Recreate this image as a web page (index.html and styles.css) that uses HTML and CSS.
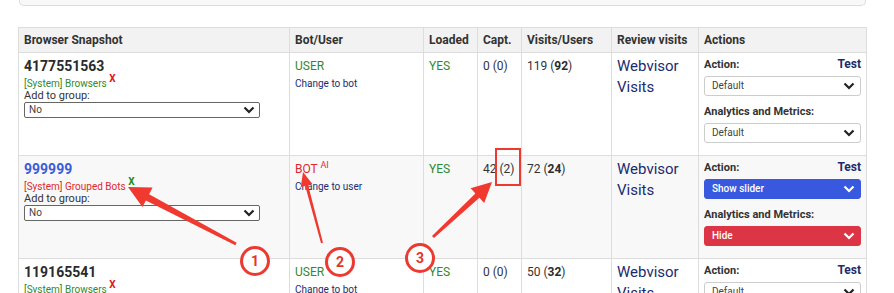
FILE: index.html
```html
<!DOCTYPE html>
<html lang="en">
<head>
    <meta charset="UTF-8">
    <title>Browser Snapshots</title>
    <link rel="stylesheet" href="styles.css">
</head>
<body>
    <div class="page">
        <div class="top-panel"></div>

        <table class="snapshots">
            <thead>
                <tr>
                    <th class="col-snap">Browser Snapshot</th>
                    <th class="col-bot">Bot/User</th>
                    <th class="col-loaded">Loaded</th>
                    <th class="col-capt">Capt.</th>
                    <th class="col-visits">Visits/Users</th>
                    <th class="col-review">Review visits</th>
                    <th class="col-actions">Actions</th>
                </tr>
            </thead>
            <tbody>
                <!-- row 1 -->
                <tr>
                    <td>
                        <div class="snap-id">4177551563</div>
                        <div class="group ok">[System] Browsers <sup class="x red">X</sup></div>
                        <div class="add-label">Add to group:</div>
                        <div class="fake-select small"><span>No</span><svg width="12" height="8" viewBox="0 0 12 8"><path d="M1.5 1.5 L6 6 L10.5 1.5" fill="none" stroke="#222" stroke-width="2.2"/></svg></div>
                    </td>
                    <td>
                        <div class="who user">USER</div>
                        <a class="change">Change to bot</a>
                    </td>
                    <td><span class="yes">YES</span></td>
                    <td class="num">0 (0)</td>
                    <td class="num">119 (<b>92</b>)</td>
                    <td><a class="webvisor">Webvisor<br>Visits</a></td>
                    <td>
                        <div class="action-head"><span>Action:</span><a class="test">Test</a></div>
                        <div class="fake-select"><span>Default</span><svg width="12" height="8" viewBox="0 0 12 8"><path d="M1.5 1.5 L6 6 L10.5 1.5" fill="none" stroke="#222" stroke-width="2.2"/></svg></div>
                        <div class="action-head metrics"><span>Analytics and Metrics:</span></div>
                        <div class="fake-select"><span>Default</span><svg width="12" height="8" viewBox="0 0 12 8"><path d="M1.5 1.5 L6 6 L10.5 1.5" fill="none" stroke="#222" stroke-width="2.2"/></svg></div>
                    </td>
                </tr>
                <!-- row 2 -->
                <tr class="striped">
                    <td>
                        <div class="snap-id blue">999999</div>
                        <div class="group bad">[System] Grouped Bots <sup class="x green">X</sup></div>
                        <div class="add-label">Add to group:</div>
                        <div class="fake-select small"><span>No</span><svg width="12" height="8" viewBox="0 0 12 8"><path d="M1.5 1.5 L6 6 L10.5 1.5" fill="none" stroke="#222" stroke-width="2.2"/></svg></div>
                    </td>
                    <td>
                        <div class="who bot">BOT <sup>AI</sup></div>
                        <a class="change">Change to user</a>
                    </td>
                    <td><span class="yes">YES</span></td>
                    <td class="num">42 (2)</td>
                    <td class="num">72 (<b>24</b>)</td>
                    <td><a class="webvisor">Webvisor<br>Visits</a></td>
                    <td>
                        <div class="action-head"><span>Action:</span><a class="test">Test</a></div>
                        <div class="fake-select filled slider"><span>Show slider</span><svg width="12" height="8" viewBox="0 0 12 8"><path d="M1.5 1.5 L6 6 L10.5 1.5" fill="none" stroke="#fff" stroke-width="2.2"/></svg></div>
                        <div class="action-head metrics"><span>Analytics and Metrics:</span></div>
                        <div class="fake-select filled hide"><span>Hide</span><svg width="12" height="8" viewBox="0 0 12 8"><path d="M1.5 1.5 L6 6 L10.5 1.5" fill="none" stroke="#fff" stroke-width="2.2"/></svg></div>
                    </td>
                </tr>
                <!-- row 3 -->
                <tr>
                    <td>
                        <div class="snap-id">119165541</div>
                        <div class="group ok">[System] Browsers <sup class="x red">X</sup></div>
                        <div class="add-label">Add to group:</div>
                        <div class="fake-select small"><span>No</span><svg width="12" height="8" viewBox="0 0 12 8"><path d="M1.5 1.5 L6 6 L10.5 1.5" fill="none" stroke="#222" stroke-width="2.2"/></svg></div>
                    </td>
                    <td>
                        <div class="who user">USER</div>
                        <a class="change">Change to bot</a>
                    </td>
                    <td><span class="yes">YES</span></td>
                    <td class="num">0 (0)</td>
                    <td class="num">50 (<b>32</b>)</td>
                    <td><a class="webvisor">Webvisor<br>Visits</a></td>
                    <td>
                        <div class="action-head"><span>Action:</span><a class="test">Test</a></div>
                        <div class="fake-select"><span>Default</span><svg width="12" height="8" viewBox="0 0 12 8"><path d="M1.5 1.5 L6 6 L10.5 1.5" fill="none" stroke="#222" stroke-width="2.2"/></svg></div>
                        <div class="action-head metrics"><span>Analytics and Metrics:</span></div>
                        <div class="fake-select"><span>Default</span><svg width="12" height="8" viewBox="0 0 12 8"><path d="M1.5 1.5 L6 6 L10.5 1.5" fill="none" stroke="#222" stroke-width="2.2"/></svg></div>
                    </td>
                </tr>
            </tbody>
        </table>

        <!-- Screenshot annotations drawn on top -->
        <svg class="annotations" width="894" height="293" viewBox="0 0 894 293">
            <g fill="#f0392f">
                <polygon points="128,187 152.6,187.6 149.1,194.2 236.7,242.7 235.3,245.3 145.9,200.4 142.4,207"/>
                <polygon points="303,172 312.4,184 308.1,185.1 323,242.7 321,243.3 305.2,185.9 300.8,187.1"/>
                <polygon points="492,182 484.2,202.9 479.4,197.8 434,238.1 432,235.9 475.4,193.4 470.6,188.3"/>
            </g>
            <rect x="496" y="149" width="24" height="36" fill="none" stroke="#ec3a30" stroke-width="2"/>
            <g class="badge">
                <circle cx="255" cy="261" r="13.5"/>
                <text x="255" y="266">1</text>
            </g>
            <g class="badge">
                <circle cx="340" cy="262" r="13.5"/>
                <text x="340" y="267">2</text>
            </g>
            <g class="badge">
                <circle cx="420" cy="258" r="13.5"/>
                <text x="420" y="263">3</text>
            </g>
        </svg>
    </div>
</body>
</html>
```

FILE: styles.css
```css
body {
    margin: 0;
    font-family: Roboto, "Liberation Sans", Arial, sans-serif;
    color: #333;
    background: #fff;
}

.page {
    position: relative;
    height: 293px;
    overflow: hidden;
    padding: 0 0 0 18px;
}

/* the panel cut off at the top of the screenshot */
.top-panel {
    width: 845px;
    height: 5px;
    margin-left: 1px;
    background: #f8f8f8;
    border: 1px solid #dcdcdc;
    border-top: none;
    border-radius: 0 0 5px 5px;
}

.snapshots {
    margin-top: 21px;
    width: 848px;
    border-collapse: collapse;
    table-layout: fixed;
    font-size: 12px;
}

.snapshots th,
.snapshots td {
    border: 1px solid #dddddd;
    text-align: left;
    vertical-align: top;
    box-sizing: border-box;
}

.snapshots th {
    background: #f2f2f2;
    font-weight: bold;
    font-size: 12px;
    color: #333;
    height: 25px;
    padding: 0 5px;
    vertical-align: middle;
}

.snapshots td {
    height: 103px;
    padding: 4px 5px 4px 5px;
    line-height: 18px;
}

.col-snap { width: 271px; }
.col-bot { width: 134px; }
.col-loaded { width: 54px; }
.col-capt { width: 44px; }
.col-visits { width: 90px; }
.col-review { width: 87px; }
.col-actions { width: 168px; }

.striped td {
    background: #f8f8f8;
}

.snap-id {
    font-size: 14px;
    font-weight: bold;
    color: #2b2b2b;
    line-height: 18px;
}

.snap-id.blue {
    color: #3b5bd9;
}

.group {
    font-size: 10px;
    line-height: 14px;
    margin-top: 2px;
}

.group.ok { color: #2f8a2f; }
.group.bad { color: #e0282c; }

.x {
    font-size: 10px;
    font-weight: bold;
    vertical-align: 5px;
    line-height: 0;
}

.x.red { color: #e3131b; }
.x.green { color: #1c8a1c; }

.add-label {
    font-size: 11px;
    line-height: 12px;
    margin-top: -1px;
    color: #333;
}

.fake-select {
    display: flex;
    align-items: center;
    justify-content: space-between;
    height: 20px;
    box-sizing: border-box;
    border: 1px solid #cccccc;
    border-radius: 3px;
    background: #fff;
    padding: 0 5px 0 7px;
    font-size: 10px;
    color: #444;
}

.fake-select.small {
    width: 236px;
    height: 16px;
    border-color: #666;
    border-radius: 2px;
    padding: 0 4px 0 4px;
}

.fake-select.filled {
    color: #fff;
    font-weight: 500;
}

.fake-select.slider {
    background: #3858e0;
    border-color: #3858e0;
}

.fake-select.hide {
    background: #dc3545;
    border-color: #dc3545;
}

.who {
    font-size: 12px;
    line-height: 18px;
}

.who.user { color: #2f8a2f; }
.who.bot { color: #e0282c; }

.who sup {
    font-size: 9px;
    line-height: 0;
}

.change {
    display: block;
    font-size: 10px;
    line-height: 14px;
    margin-top: 2px;
    color: #1c2b6e;
}

.yes {
    color: #2f8a2f;
}

.num b {
    color: #2b2b2b;
}

.webvisor {
    display: block;
    font-size: 15px;
    line-height: 21px;
    color: #1c2b6e;
    margin-top: -1px;
}

.action-head {
    display: flex;
    justify-content: space-between;
    font-size: 11px;
    font-weight: bold;
    line-height: 15px;
    margin-bottom: 4px;
}

.action-head.metrics {
    margin-top: 8px;
}

.test {
    font-size: 12px;
    color: #1c2b6e;
}

.annotations {
    position: absolute;
    left: 0;
    top: 0;
    pointer-events: none;
}

.badge circle {
    fill: #fff;
    stroke: #ec3a30;
    stroke-width: 3;
}

.badge text {
    fill: #e53329;
    font-family: Roboto, "Liberation Sans", sans-serif;
    font-size: 14px;
    font-weight: bold;
    text-anchor: middle;
}
```
